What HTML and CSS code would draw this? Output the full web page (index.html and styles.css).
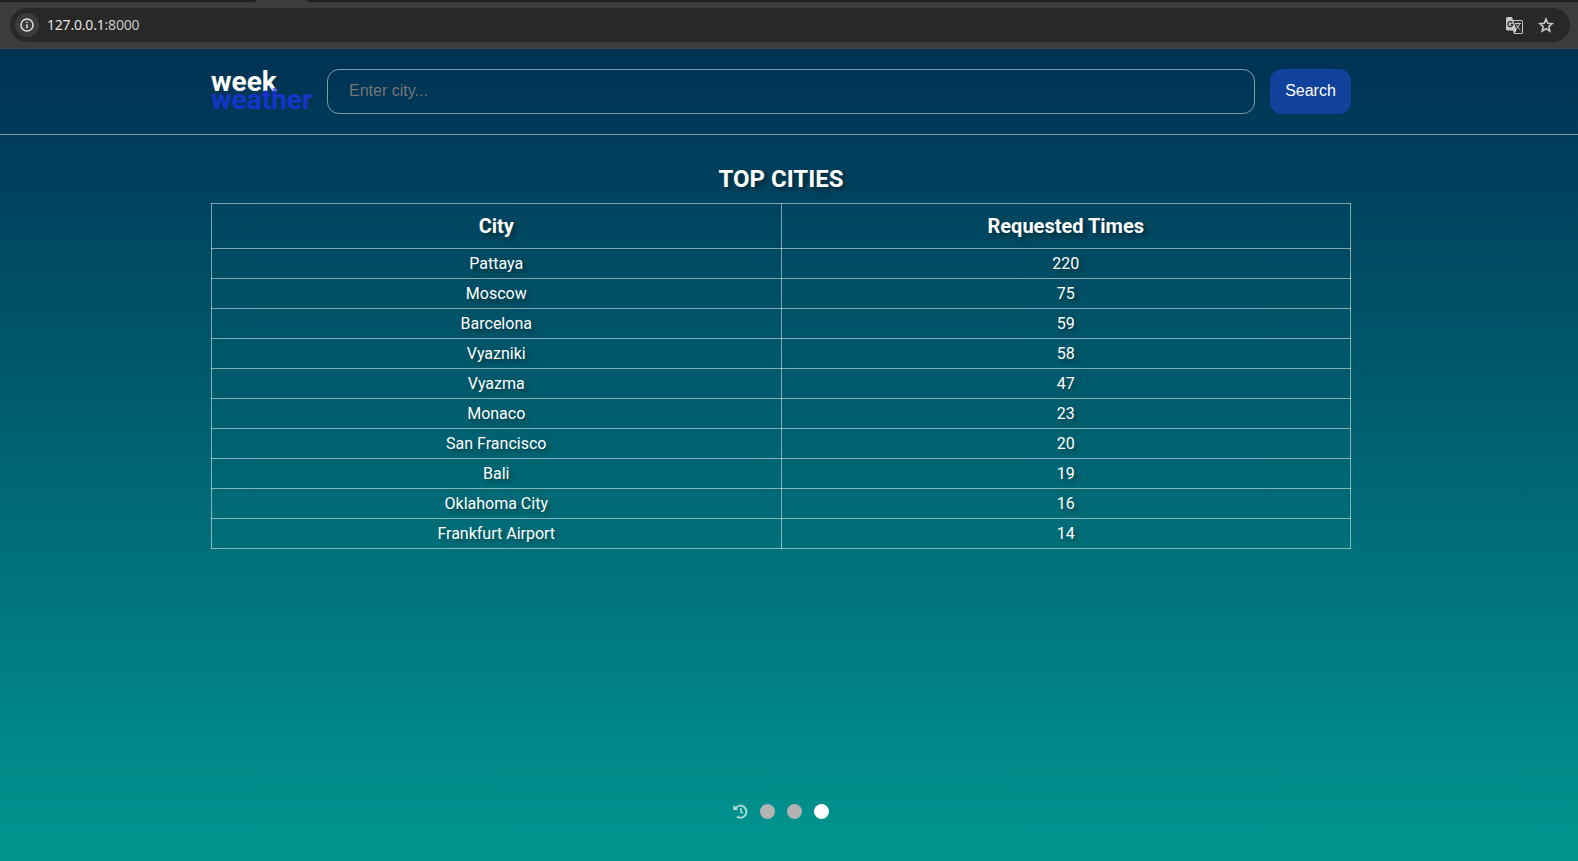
FILE: index.html
```html
<!DOCTYPE html>
<html lang="en">
<head>
<meta charset="utf-8">
<title>Week weather</title>
<link rel="stylesheet" href="styles.css">
</head>
<body>
<div class="browser">
  <div class="tabstrip"><div class="tabs-left"></div><div class="tabs-right"></div></div>
  <div class="omnibox">
    <span class="info"><svg width="14" height="14" viewBox="0 0 14 14" fill="none" stroke="#dedede" stroke-width="1.5"><circle cx="7" cy="7" r="6"/><path d="M7 6.2v4M7 3.5v1.5"/></svg></span>
    <span class="url">127.0.0.1<span class="port">:8000</span></span>
    <svg class="translate" width="17" height="17" viewBox="0 0 17 17"><path d="M1.500 0H6l1 3h8.500q1.500 0 1.500 1.500v11q0 1.500-1.500 1.500H8l-1-3.500H1.500Q0 13.500 0 12V1.500Q0 0 1.500 0z" fill="#c7c7c7"/><path d="M7.500 4h8.500v12H8.700l2-2.500z" fill="#282828"/><path d="M6.300 5.600A2.500 2.500 0 1 0 6.800 7.300H4.600" fill="none" stroke="#282828" stroke-width="1.300"/><path d="M9 6.500h6M12 5.200v1.300M13.800 6.500q-.8 3.500-4 5.500M10.200 7.500q1.500 3.500 4.300 5.500" fill="none" stroke="#c7c7c7"/></svg>
    <svg class="star" width="16" height="16" viewBox="0 0 16 16" fill="none" stroke="#c7c7c7" stroke-width="1.600"><path d="M8 2l1.750 4.200 4.500.4-3.400 3 1 4.400L8 11.700 4.150 14l1-4.400-3.400-3 4.500-.4z"/></svg>
  </div>
</div>
<div class="page">
  <header class="header">
    <a class="logo"><span class="logo-top">week</span><span class="logo-bottom">weather</span></a>
    <input class="city-input" type="text" placeholder="Enter city...">
    <button class="search">Search</button>
  </header>
  <main class="content">
    <h1 class="title">TOP CITIES</h1>
    <table class="cities">
      <thead><tr><th>City</th><th>Requested Times</th></tr></thead>
      <tbody>
        <tr><td>Pattaya</td><td>220</td></tr>
        <tr><td>Moscow</td><td>75</td></tr>
        <tr><td>Barcelona</td><td>59</td></tr>
        <tr><td>Vyazniki</td><td>58</td></tr>
        <tr><td>Vyazma</td><td>47</td></tr>
        <tr><td>Monaco</td><td>23</td></tr>
        <tr><td>San Francisco</td><td>20</td></tr>
        <tr><td>Bali</td><td>19</td></tr>
        <tr><td>Oklahoma City</td><td>16</td></tr>
        <tr><td>Frankfurt Airport</td><td>14</td></tr>
      </tbody>
    </table>
  </main>
  <nav class="pager">
    <svg width="15" height="15" viewBox="0 0 15 15" fill="none" stroke="#b0dedb" stroke-width="1.900"><path d="M2.300 4.600A6 6 0 1 1 3.900 12.500"/><path d="M8 4v4l2 1.200" stroke-width="1.500"/><path d="M.3 1v5h5z" fill="#b0dedb" stroke="none"/></svg>
    <span class="dot"></span><span class="dot"></span><span class="dot active"></span>
  </nav>
</div>
</body>
</html>
```
FILE: styles.css
```css
* { box-sizing: border-box; }
body { margin: 0; height: 861px; overflow: hidden; display: flex; flex-direction: column; font-family: Roboto, sans-serif; color: #fff; }
.browser { height: 49px; background: #3c3c3c; border-bottom: 1px solid #484848; flex: none; }
.tabstrip { height: 2px; display: flex; justify-content: space-between; }
.tabs-left { width: 257px; background: #1f2020; border-bottom-right-radius: 3px; }
.tabs-right { width: 1271px; background: #1f2020; border-bottom-left-radius: 3px; }
.omnibox { margin: 6px 8px 0 10px; height: 34px; border-radius: 17px; background: #282828; display: flex; align-items: center; padding: 0 16px 0 5px; }
.info { width: 24px; height: 24px; border-radius: 50%; background: #3c3c3c; display: flex; align-items: center; justify-content: center; }
.url { margin-left: 8px; padding-bottom: 2px; flex: 1; font: 14px "Noto Sans", sans-serif; letter-spacing: -.2px; color: #e3e3e3; }
.port { color: #c7c7c7; }
.star { margin-left: 15px; }
.page { flex: 1; display: flex; flex-direction: column; background: linear-gradient(#003153, #009690); }
.header { height: 86px; flex: none; display: flex; gap: 15px; padding: 20px 227px 20px 211px; border-bottom: 1px solid rgba(255,255,255,.5); }
.logo { width: 101px; font-size: 28px; font-weight: 700; line-height: 18px; padding-top: 4px; display: flex; flex-direction: column; white-space: nowrap; }
.logo-bottom { color: rgba(34,51,255,.7); }
.city-input { flex: 1; min-width: 0; height: 45px; border: 1px solid rgba(255,255,255,.5); border-radius: 12px; background: transparent; padding: 0 21px 2px; font: 16px "Liberation Sans", sans-serif; color: #fff; }
.city-input::placeholder { color: #757575; }
.search { width: 81px; height: 45px; padding: 0 0 2px; border: 0; border-radius: 12px; background: #10419b; color: #fff; font: 16px "Liberation Sans", sans-serif; }
.content { flex: 1; padding: 30px 227px 0 211px; text-align: center; text-shadow: 3px 3px 5px rgba(0,0,0,.4); }
.title { margin: 0; height: 38px; font-size: 24px; line-height: 28px; font-weight: 700; }
.cities { width: 1140px; table-layout: fixed; border-collapse: collapse; }
.cities th, .cities td { border: 1px solid rgba(255,255,255,.5); padding: 0; }
.cities th { height: 45px; font-size: 20px; font-weight: 700; }
.cities td { height: 30px; font-size: 16px; }
.pager { height: 57px; display: flex; gap: 12px; padding-left: 733px; flex: none; }
.dot { width: 15px; height: 15px; border-radius: 50%; background: #b3b3b3; }
.active { background: #fff; }
```
